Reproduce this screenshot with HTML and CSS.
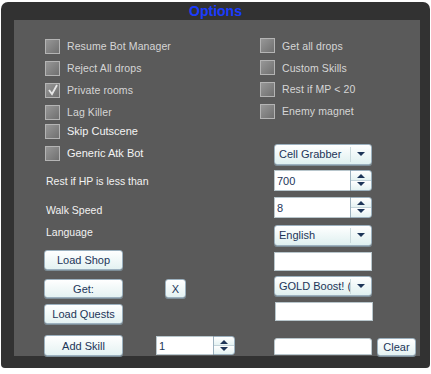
FILE: index.html
```html
<!DOCTYPE html>
<html lang="en">
<head>
    <meta charset="UTF-8">
    <title>Options</title>
    <link rel="stylesheet" href="styles.css">
</head>
<body>
    <div class="window">
        <div class="title">Options</div>
        <div class="panel">
            <!-- Left column -->
            <div class="col col-left">
                <div class="check"><span class="box"></span>Resume Bot Manager</div>
                <div class="check"><span class="box"></span>Reject All drops</div>
                <div class="check"><span class="box"><svg width="12" height="12" viewBox="0 0 12 12"><polyline points="2,6 5,10 10,1" fill="none" stroke="#e6e6e6" stroke-width="1.8"/></svg></span>Private rooms</div>
                <div class="check"><span class="box"></span>Lag Killer</div>
                <div class="check bright skip"><span class="box"></span>Skip Cutscene</div>
                <div class="check bright generic"><span class="box"></span>Generic Atk Bot</div>

                <div class="label hp">Rest if HP is less than</div>
                <div class="label walk">Walk Speed</div>
                <div class="label lang">Language</div>

                <button class="btn wide shop">Load Shop</button>
                <div class="row get">
                    <button class="btn wide">Get:</button>
                    <button class="btn small">X</button>
                </div>
                <button class="btn wide quests">Load Quests</button>
                <div class="row skill">
                    <button class="btn wide">Add Skill</button>
                    <div class="num short">
                        <span class="num-field">1</span>
                        <span class="spin"><i class="up"></i><i class="down"></i></span>
                    </div>
                </div>
            </div>

            <!-- Right column -->
            <div class="col col-right">
                <div class="check"><span class="box"></span>Get all drops</div>
                <div class="check"><span class="box"></span>Custom Skills</div>
                <div class="check"><span class="box"></span>Rest if MP &lt; 20</div>
                <div class="check"><span class="box"></span>Enemy magnet</div>

                <div class="ctrl select cell"><span class="sel-text">Cell Grabber</span><span class="drop"><i class="down"></i></span></div>
                <div class="ctrl num hp-num">
                    <span class="num-field">700</span>
                    <span class="spin"><i class="up"></i><i class="down"></i></span>
                </div>
                <div class="ctrl num walk-num">
                    <span class="num-field">8</span>
                    <span class="spin"><i class="up"></i><i class="down"></i></span>
                </div>
                <div class="ctrl select lang-sel"><span class="sel-text">English</span><span class="drop"><i class="down"></i></span></div>
                <div class="ctrl field shop-field"></div>
                <div class="ctrl select gold"><span class="sel-text">GOLD Boost! (</span><span class="drop"><i class="down"></i></span></div>
                <div class="ctrl field quest-field"></div>
                <div class="ctrl bottom">
                    <div class="field skill-field"></div>
                    <button class="btn clear">Clear</button>
                </div>
            </div>
        </div>
    </div>
</body>
</html>
```

FILE: styles.css
```css
body {
    margin: 0;
    background: #fff;
    font-family: 'Liberation Sans', Arial, sans-serif;
}

.window {
    width: 429px;
    height: 366px;
    margin: 2px 0 0 1px;
    background-color: #323232;
    border-radius: 7px 7px 4px 4px;
    overflow: hidden;
}

.title {
    height: 18px;
    line-height: 19px;
    text-align: center;
    color: #1a3cff;
    font-weight: bold;
    font-size: 14px;
}

.panel {
    display: flex;
    width: 376px;
    height: 321px;
    margin-left: 13px;
    padding: 15px 0 0 30px;
    background-color: #5a5a5a;
}

.col {
    display: flex;
    flex-direction: column;
}

.col-left {
    width: 216px;
}

.col-right {
    width: 160px;
}

/* checkboxes */
.check {
    display: flex;
    align-items: center;
    gap: 7px;
    height: 22px;
    color: #d6d6d6;
    font-size: 10.5px;
    letter-spacing: 0.1px;
}

.check.bright {
    color: #f4f4f4;
    font-size: 11px;
    letter-spacing: 0;
}

.col-left .check {
    margin-left: 1px;
}

.check.skip {
    height: 20px;
    margin-top: -2px;
}

.check.generic {
    margin-top: 1px;
}

.box {
    display: flex;
    align-items: center;
    justify-content: center;
    width: 15px;
    height: 15px;
    box-sizing: border-box;
    border: 1px solid #b4b4b4;
    background: linear-gradient(135deg, #979797, #707070);
}

/* labels */
.label {
    height: 20px;
    line-height: 20px;
    margin-left: 2px;
    color: #f2f2f2;
    font-size: 10.5px;
}

.label.hp {
    margin-top: 7px;
}

.label.walk {
    margin-top: 9px;
}

.label.lang {
    margin-top: 2px;
}

/* buttons */
.btn {
    height: 20px;
    padding: 0;
    border: 1px solid #9cb1bf;
    border-radius: 3px;
    background: linear-gradient(#ffffff, #e4f2f2);
    color: #1d3558;
    font-family: 'Liberation Sans', Arial, sans-serif;
    font-size: 11px;
    box-shadow: 0 1px 0 #7d8e98;
}

.btn.wide {
    width: 79px;
}

.btn.small {
    width: 21px;
    height: 19px;
}

.btn.shop {
    margin-top: 8px;
}

.row {
    display: flex;
    align-items: center;
}

.row.get {
    height: 19px;
    margin-top: 9px;
    gap: 42px;
}

.row.get .btn.wide {
    height: 19px;
}

.btn.quests {
    margin-top: 6px;
}

.row.skill {
    margin-top: 11px;
    gap: 33px;
}

.row.skill .btn {
    height: 21px;
}

/* right column controls */
.ctrl {
    width: 98px;
    margin-left: 14px;
    box-sizing: border-box;
}

.select {
    display: flex;
    align-items: center;
    justify-content: space-between;
    height: 21px;
    padding-left: 4px;
    border: 1px solid #9cb1bf;
    border-radius: 3px;
    background: linear-gradient(#ffffff, #dff0f0);
    color: #1d3558;
    font-size: 11px;
    box-shadow: 0 1px 0 #7d8e98;
}

.sel-text {
    flex: 1;
    white-space: nowrap;
    overflow: hidden;
}

.drop {
    display: flex;
    align-items: center;
    justify-content: center;
    width: 20px;
    height: 15px;
    border-left: 1px solid #c9d9dc;
}

.num {
    display: flex;
    height: 21px;
}

.num-field {
    flex: 1;
    padding-left: 2px;
    line-height: 20px;
    background: #fff;
    border: 1px solid #b8c6cc;
    border-right: none;
    color: #1d3558;
    font-size: 11px;
}

.num.short {
    width: 79px;
    height: 19px;
    box-sizing: border-box;
}

.num.short .num-field {
    line-height: 18px;
}

.spin {
    display: flex;
    flex-direction: column;
    align-items: center;
    justify-content: space-evenly;
    width: 20px;
    border: 1px solid #9cb1bf;
    border-radius: 0 3px 3px 0;
    background: linear-gradient(#ffffff 0%, #e4f2f2 48%, #c3d4da 50%, #ffffff 52%, #e4f2f2 100%);
}

.up,
.down {
    width: 0;
    height: 0;
    border-left: 4px solid transparent;
    border-right: 4px solid transparent;
}

.up {
    border-bottom: 4px solid #1d3558;
}

.down {
    border-top: 4px solid #1d3558;
}

.cell {
    margin-top: 22px;
}

.hp-num {
    margin-top: 5px;
}

.walk-num {
    margin-top: 6px;
}

.lang-sel {
    margin-top: 7px;
}

.field {
    height: 20px;
    background: #fff;
    border: 1px solid #b8c6cc;
    box-sizing: border-box;
}

.shop-field {
    margin-top: 6px;
}

.gold {
    height: 20px;
    margin-top: 5px;
}

.quest-field {
    height: 19px;
    margin-top: 6px;
    margin-left: 15px;
}

.bottom {
    display: flex;
    width: auto;
    gap: 5px;
    margin-top: 17px;
}

.skill-field {
    width: 98px;
    height: 17px;
    border-radius: 3px 3px 0 0;
}

.btn.clear {
    width: 39px;
    height: 18px;
    font-size: 11px;
}
```
